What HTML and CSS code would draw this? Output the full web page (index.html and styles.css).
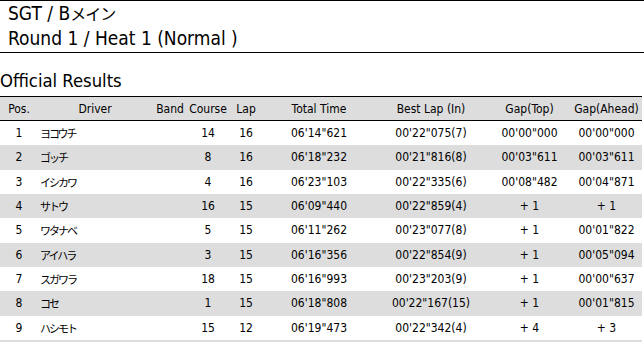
FILE: index.html
```html
<!DOCTYPE html>
<html lang="ja">
<head>
<meta charset="utf-8">
<link rel="stylesheet" href="styles.css">
</head>
<body>
<div class="head">
  <div class="title">SGT / B<span class="jp">メイン</span></div>
  <div class="title">Round 1 / Heat 1 (Normal )</div>
</div>
<h2 class="section">Official Results</h2>
<table class="results">
  <colgroup>
    <col class="c-pos"><col class="c-driver"><col class="c-band"><col class="c-course"><col class="c-lap"><col class="c-total"><col class="c-best"><col class="c-gtop"><col class="c-gahead">
  </colgroup>
  <thead>
    <tr><th>Pos.</th><th>Driver</th><th>Band</th><th>Course</th><th>Lap</th><th>Total Time</th><th>Best Lap (In)</th><th>Gap(Top)</th><th>Gap(Ahead)</th></tr>
  </thead>
  <tbody>
    <tr><td>1</td><td class="name">ヨコウチ</td><td></td><td>14</td><td>16</td><td>06'14"621</td><td>00'22"075(7)</td><td>00'00"000</td><td>00'00"000</td></tr>
    <tr><td>2</td><td class="name">ゴッチ</td><td></td><td>8</td><td>16</td><td>06'18"232</td><td>00'21"816(8)</td><td>00'03"611</td><td>00'03"611</td></tr>
    <tr><td>3</td><td class="name">イシカワ</td><td></td><td>4</td><td>16</td><td>06'23"103</td><td>00'22"335(6)</td><td>00'08"482</td><td>00'04"871</td></tr>
    <tr><td>4</td><td class="name">サトウ</td><td></td><td>16</td><td>15</td><td>06'09"440</td><td>00'22"859(4)</td><td>+ 1</td><td>+ 1</td></tr>
    <tr><td>5</td><td class="name">ワタナベ</td><td></td><td>5</td><td>15</td><td>06'11"262</td><td>00'23"077(8)</td><td>+ 1</td><td>00'01"822</td></tr>
    <tr><td>6</td><td class="name">アイハラ</td><td></td><td>3</td><td>15</td><td>06'16"356</td><td>00'22"854(9)</td><td>+ 1</td><td>00'05"094</td></tr>
    <tr><td>7</td><td class="name">スガワラ</td><td></td><td>18</td><td>15</td><td>06'16"993</td><td>00'23"203(9)</td><td>+ 1</td><td>00'00"637</td></tr>
    <tr><td>8</td><td class="name">コセ</td><td></td><td>1</td><td>15</td><td>06'18"808</td><td>00'22"167(15)</td><td>+ 1</td><td>00'01"815</td></tr>
    <tr><td>9</td><td class="name">ハシモト</td><td></td><td>15</td><td>12</td><td>06'19"473</td><td>00'22"342(4)</td><td>+ 4</td><td>+ 3</td></tr>
  </tbody>
</table>
</body>
</html>
```
FILE: styles.css
```css
html, body {
  margin: 0;
  padding: 0;
  background: #fff;
  color: #000;
  font-family: "DejaVu Sans", "Noto Sans CJK JP", sans-serif;
  font-stretch: condensed;
}
.head {
  border-top: 1px solid #000;
  border-bottom: 1px solid #000;
  padding: 0 0 1px 8px;
}
.title {
  font-size: 19px;
  line-height: 25px;
}
.jp {
  font-family: "Noto Sans CJK JP", sans-serif;
  font-size: 16px;
  letter-spacing: -1px;
}
.section {
  margin: 16px 0 3px 0;
  font-size: 18.3px;
  font-weight: normal;
  line-height: 24px;
}
.results {
  width: 642px;
  border-collapse: collapse;
  table-layout: fixed;
  font-size: 12px;
  border-bottom: 3px solid #ddd;
}
.c-pos { width: 38px; }
.c-driver { width: 114px; }
.c-band { width: 36px; }
.c-course { width: 40px; }
.c-lap { width: 36px; }
.c-total { width: 110px; }
.c-best { width: 114px; }
.c-gtop { width: 83px; }
.c-gahead { width: 71px; }
.results th {
  font-weight: normal;
  background: #ddd;
  height: 23px;
  padding: 0;
  border-top: 1px solid #000;
  border-bottom: 1px solid #000;
  text-align: center;
  white-space: nowrap;
}
.results td {
  height: 24.33px;
  padding: 0;
  text-align: center;
  white-space: nowrap;
}
.results td.name {
  text-align: left;
  padding-left: 2px;
  font-family: "Noto Sans CJK JP", sans-serif;
  font-size: 11px;
  letter-spacing: -2px;
}
.results tbody tr:nth-child(even) td {
  background: #ddd;
}
```
